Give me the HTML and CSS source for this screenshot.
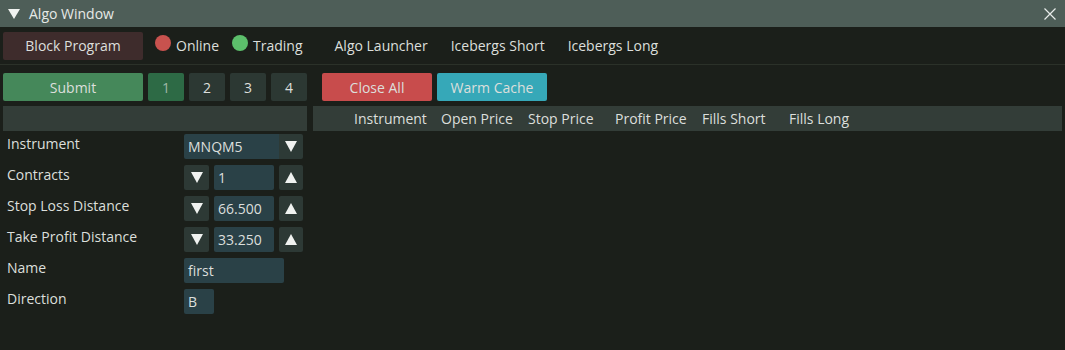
FILE: index.html
```html
<!DOCTYPE html>
<html lang="en">
<head>
    <meta charset="UTF-8">
    <title>Algo Window</title>
    <link rel="stylesheet" href="styles.css">
</head>
<body>
    <div class="window">
        <div class="title-bar">
            <span class="collapse"></span>
            <span class="title">Algo Window</span>
            <svg class="close" width="12" height="12" viewBox="0 0 12 12">
                <path d="M0.5 0.5 L11.5 11.5 M11.5 0.5 L0.5 11.5" stroke="#e8ecea" stroke-width="1.2" fill="none"/>
            </svg>
        </div>

        <div class="menu-bar">
            <button class="btn btn-block">Block Program</button>
            <span class="status"><span class="dot dot-red"></span>Online</span>
            <span class="status"><span class="dot dot-green"></span>Trading</span>
            <span class="tab tab-first">Algo Launcher</span>
            <span class="tab">Icebergs Short</span>
            <span class="tab">Icebergs Long</span>
        </div>

        <div class="content">
            <div class="left">
                <div class="toolbar">
                    <button class="btn btn-submit">Submit</button>
                    <button class="btn btn-num active">1</button>
                    <button class="btn btn-num">2</button>
                    <button class="btn btn-num">3</button>
                    <button class="btn btn-num">4</button>
                </div>
                <div class="panel-header"></div>
                <div class="form">
                    <div class="form-row">
                        <span class="label">Instrument</span>
                        <div class="combo">
                            <span class="combo-value">MNQM5</span>
                            <span class="combo-arrow"><span class="tri-down"></span></span>
                        </div>
                    </div>
                    <div class="form-row">
                        <span class="label">Contracts</span>
                        <div class="spin">
                            <span class="spin-btn"><span class="tri-down"></span></span>
                            <span class="field field-num">1</span>
                            <span class="spin-btn"><span class="tri-up"></span></span>
                        </div>
                    </div>
                    <div class="form-row">
                        <span class="label">Stop Loss Distance</span>
                        <div class="spin">
                            <span class="spin-btn"><span class="tri-down"></span></span>
                            <span class="field field-num">66.500</span>
                            <span class="spin-btn"><span class="tri-up"></span></span>
                        </div>
                    </div>
                    <div class="form-row">
                        <span class="label">Take Profit Distance</span>
                        <div class="spin">
                            <span class="spin-btn"><span class="tri-down"></span></span>
                            <span class="field field-num">33.250</span>
                            <span class="spin-btn"><span class="tri-up"></span></span>
                        </div>
                    </div>
                    <div class="form-row">
                        <span class="label">Name</span>
                        <span class="field field-name">first</span>
                    </div>
                    <div class="form-row">
                        <span class="label">Direction</span>
                        <span class="field field-dir">B</span>
                    </div>
                </div>
            </div>

            <div class="right">
                <div class="toolbar">
                    <button class="btn btn-close">Close All</button>
                    <button class="btn btn-cache">Warm Cache</button>
                </div>
                <div class="table-header">
                    <span>Instrument</span>
                    <span>Open Price</span>
                    <span>Stop Price</span>
                    <span>Profit Price</span>
                    <span>Fills Short</span>
                    <span>Fills Long</span>
                </div>
            </div>
        </div>
    </div>
</body>
</html>
```

FILE: styles.css
```css
body {
    margin: 0;
    width: 1065px;
    height: 350px;
    overflow: hidden;
    background-color: #1b1f1a;
    font-family: "Open Sans", "Noto Sans", sans-serif;
    font-size: 14px;
    color: #dcdfdc;
}

.title-bar {
    display: flex;
    align-items: center;
    height: 27px;
    padding-left: 8px;
    padding-right: 9px;
    background-color: #4e5e58;
}

.collapse {
    width: 0;
    height: 0;
    border-left: 6.5px solid transparent;
    border-right: 6.5px solid transparent;
    border-top: 10px solid #f0f2f0;
    margin-right: 9px;
    margin-top: 1px;
}

.title {
    flex: 1;
    color: #e6e9e6;
}

.close {
    display: block;
}

.menu-bar {
    display: flex;
    align-items: center;
    height: 37px;
    padding: 0 3px;
    border-bottom: 1px solid #2b3129;
}

.btn {
    height: 28px;
    border: none;
    border-radius: 2px;
    font-family: inherit;
    font-size: 14px;
    color: #dcdfdc;
    padding: 0;
    cursor: pointer;
}

.btn-block {
    width: 140px;
    background-color: #3e2c2c;
}

.status {
    display: flex;
    align-items: center;
    margin-left: 12px;
}

.status + .status {
    margin-left: 13px;
}

.dot {
    width: 16px;
    height: 16px;
    border-radius: 50%;
    margin-right: 5px;
    margin-top: -6px;
}

.dot-red {
    background-color: #c8524e;
}

.dot-green {
    background-color: #5cbf6b;
}

.tab {
    margin-left: 23px;
}

.tab-first {
    margin-left: 32px;
}

.content {
    display: flex;
    padding: 8px 3px 0 3px;
}

.toolbar {
    display: flex;
    gap: 5px;
    height: 28px;
}

.left {
    width: 304px;
}

.right {
    flex: 1;
    margin-left: 6px;
}

.right .toolbar {
    margin-left: 9px;
}

.btn-submit {
    width: 140px;
    background-color: #45885a;
}

.btn-num {
    width: 36px;
    background-color: #2c3833;
}

.btn-num.active {
    background-color: #2d6a45;
    color: #9fb8a7;
}

.btn-close {
    width: 110px;
    background-color: #c84c4c;
}

.btn-cache {
    width: 110px;
    background-color: #36a8b8;
}

.panel-header {
    height: 25px;
    margin-top: 5px;
    background-color: #333d38;
}

.form {
    display: flex;
    flex-direction: column;
    gap: 6px;
    padding-top: 3px;
}

.form-row {
    display: flex;
    height: 25px;
}

.label {
    width: 177px;
    padding-left: 4px;
    line-height: 20px;
}

.combo {
    display: flex;
    width: 119px;
    height: 25px;
}

.combo-value {
    flex: 1;
    padding-left: 4px;
    line-height: 25px;
    background-color: #2a4147;
    border-radius: 2px 0 0 2px;
}

.combo-arrow {
    display: flex;
    align-items: center;
    justify-content: center;
    width: 24px;
    background-color: #2d3a36;
    border-radius: 0 2px 2px 0;
}

.spin {
    display: flex;
    gap: 5px;
}

.spin-btn {
    display: flex;
    align-items: center;
    justify-content: center;
    width: 25px;
    height: 25px;
    background-color: #2d3935;
    border-radius: 2px;
}

.spin-btn:last-child {
    width: 24px;
}

.tri-down,
.tri-up {
    width: 0;
    height: 0;
    border-left: 6.5px solid transparent;
    border-right: 6.5px solid transparent;
}

.tri-down {
    border-top: 11px solid #f0f2f0;
}

.tri-up {
    border-bottom: 11px solid #f0f2f0;
}

.field {
    display: block;
    height: 25px;
    line-height: 25px;
    padding-left: 4px;
    box-sizing: border-box;
    background-color: #2a4147;
    border-radius: 2px;
}

.field-num {
    width: 60px;
}

.field-name {
    width: 100px;
}

.field-dir {
    width: 30px;
}

.table-header {
    display: grid;
    grid-template-columns: repeat(6, 87px);
    height: 25px;
    line-height: 25px;
    margin-top: 5px;
    padding-left: 41px;
    background-color: #333d38;
}
```
